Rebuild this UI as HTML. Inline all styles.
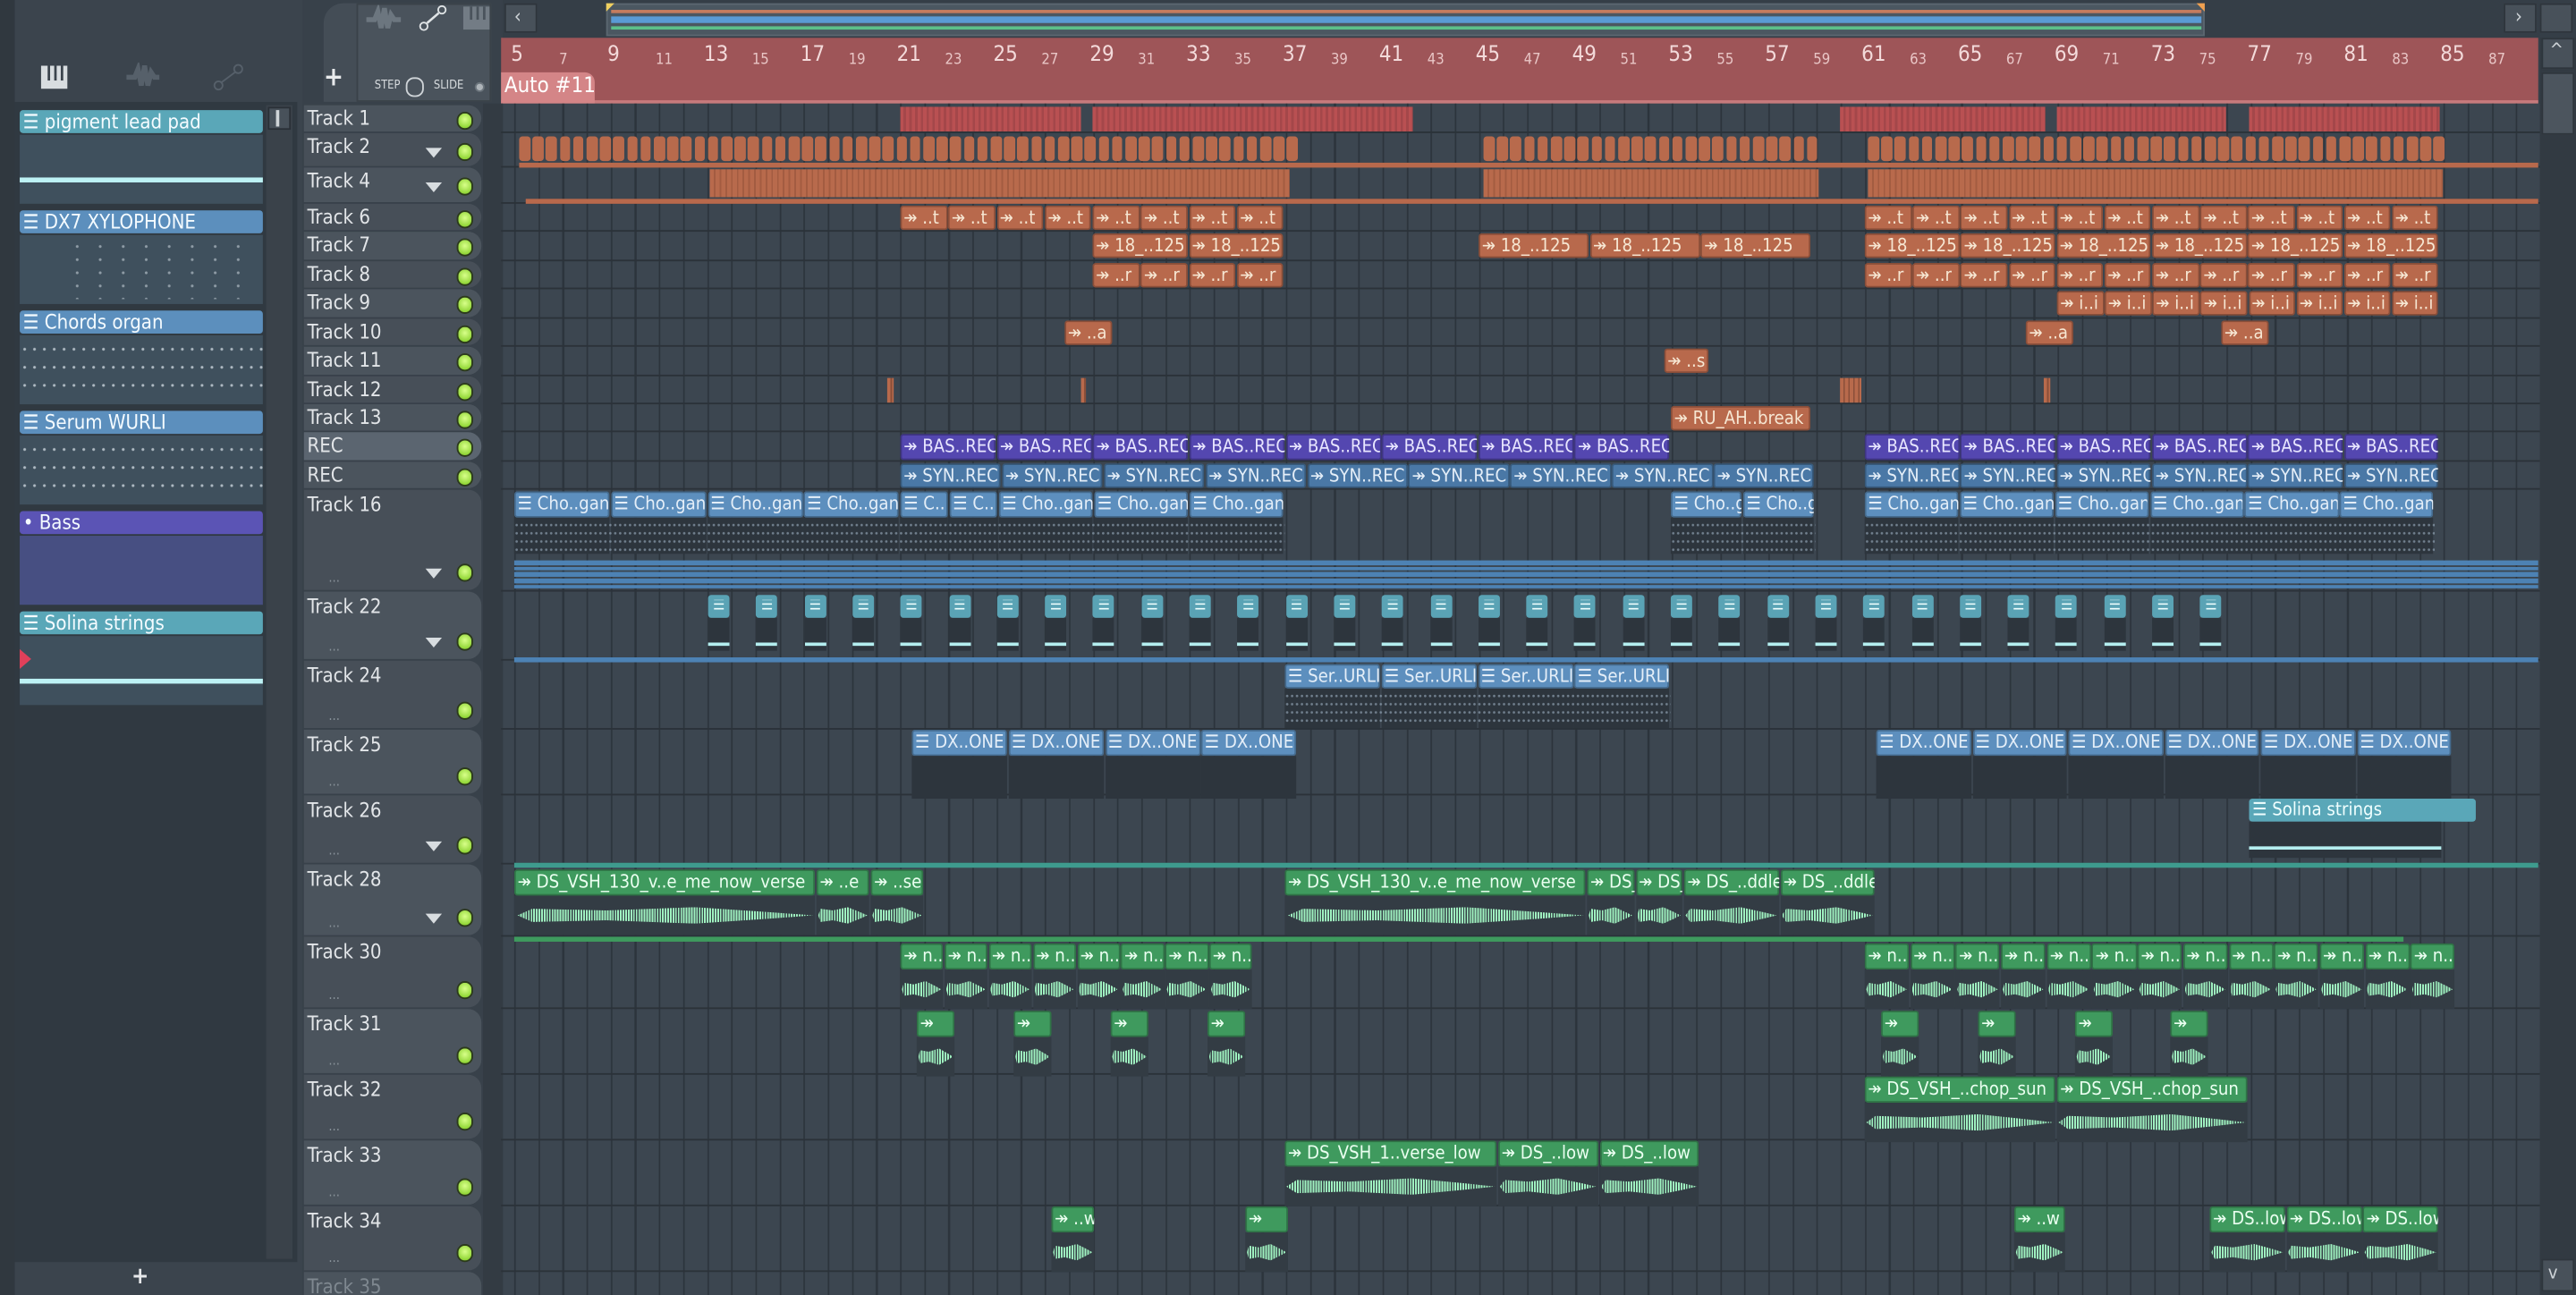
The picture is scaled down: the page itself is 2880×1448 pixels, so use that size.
<!DOCTYPE html>
<html><head><meta charset="utf-8">
<style>
html,body{margin:0;padding:0;background:#363f48;overflow:hidden;width:2880px;height:1448px}
#w{position:absolute;left:0;top:0;width:1568px;height:788px;transform-origin:0 0;transform:scale(1.83673,1.83756);background:#38414a;font-family:"Liberation Sans Narrow","DejaVu Sans Condensed","Liberation Sans",sans-serif;overflow:hidden}
.a{position:absolute;box-sizing:border-box}
.t{position:absolute;white-space:nowrap;overflow:hidden;font-size:11px;line-height:14px}
</style></head><body><div id="w">
<div class="a" style="left:0;top:0;width:184px;height:788px;background:#3b444d"></div>
<div class="a" style="left:0;top:0;width:9px;height:788px;background:#30383f"></div>
<div class="a" style="left:9px;top:62px;width:172px;height:706px;background:#303941"></div>
<div class="a" style="left:162px;top:64px;width:16px;height:702px;background:#3a424a"></div>
<div class="a" style="left:163px;top:65px;width:14px;height:14px;background:#48515a;border:1px solid #2a3037"></div>
<div class="a" style="left:168px;top:67px;width:2px;height:10px;background:#cfd4d8"></div>
<div class="t" style="left:80px;top:770px;color:#e6e8ea;font-size:14px;font-weight:bold">+</div>
<svg class="a" style="left:24px;top:38px" width="20" height="18" viewBox="0 0 20 18"><rect x="1" y="2" width="16" height="14" fill="#d8dde0"/><rect x="5" y="2" width="1.5" height="9" fill="#3b444d"/><rect x="9" y="2" width="1.5" height="9" fill="#3b444d"/><rect x="13" y="2" width="1.5" height="9" fill="#3b444d"/></svg>
<svg class="a" style="left:76px;top:38px" width="22" height="18" viewBox="0 0 22 18"><path d="M1 9h5l2-5 2 10 2-12 2 12 2-8 2 3h3" stroke="#56606a" stroke-width="3" fill="none"/></svg>
<svg class="a" style="left:128px;top:38px" width="22" height="18"><circle cx="5" cy="14" r="2.5" stroke="#56606a" fill="none"/><circle cx="17" cy="4" r="2.5" stroke="#56606a" fill="none"/><path d="M7 12L15 6" stroke="#56606a"/></svg>
<div class="a" style="left:185px;top:0;width:120px;height:62px;background:#38414a"></div>
<div class="a" style="left:197px;top:2px;width:20px;height:60px;background:#444d56;border-top-left-radius:12px"></div>
<div class="a" style="left:217px;top:2px;width:82px;height:60px;background:#4a535c;border:1px solid #3a4249"></div>
<div class="t" style="left:197px;top:40px;color:#e8eaec;font-size:16px;font-weight:bold;width:14px">+</div>
<div class="t" style="left:228px;top:48px;color:#d6dadd;font-size:7px;line-height:9px">STEP</div>
<div class="a" style="left:247px;top:47px;width:11px;height:12px;border:1px solid #cfd4d8;border-radius:5px"></div>
<div class="t" style="left:264px;top:48px;color:#d6dadd;font-size:7px;line-height:9px">SLIDE</div>
<div class="a" style="left:289px;top:50px;width:6px;height:6px;border-radius:3px;background:#aeb4b9;border:1px solid #6b747c"></div>
<svg class="a" style="left:222px;top:3px" width="24" height="18"><path d="M1 9h5l2-5 2 10 2-12 2 12 2-8 2 3h4" stroke="#6c767f" stroke-width="3" fill="none"/></svg>
<svg class="a" style="left:253px;top:2px" width="22" height="18"><circle cx="5" cy="14" r="2.3" stroke="#e0e4e6" fill="none"/><circle cx="16" cy="4" r="2.3" stroke="#e0e4e6" fill="none"/><path d="M7 12L14 6" stroke="#e0e4e6" stroke-width="1.4"/></svg>
<svg class="a" style="left:281px;top:3px" width="18" height="16"><rect x="1" y="1" width="16" height="14" fill="#737c85"/><rect x="5" y="1" width="1.5" height="8" fill="#4a535c"/><rect x="9" y="1" width="1.5" height="8" fill="#4a535c"/><rect x="13" y="1" width="1.5" height="8" fill="#4a535c"/></svg>
<div class="a" style="left:306px;top:0;width:1262px;height:23px;background:#353e47"></div>
<div class="a" style="left:307px;top:2px;width:20px;height:18px;background:#48515a;border:1px solid #2e353c"></div>
<div class="t" style="left:313px;top:3px;color:#cfd4d8;font-size:12px">‹</div>
<div class="a" style="left:1524px;top:2px;width:20px;height:18px;background:#48515a;border:1px solid #2e353c"></div>
<div class="t" style="left:1531px;top:3px;color:#cfd4d8;font-size:12px">›</div>
<div class="a" style="left:1546px;top:2px;width:20px;height:18px;background:#48515a;border:1px solid #2e353c"></div>
<div class="a" style="left:369px;top:2px;width:973px;height:20px;background:#4b5761;border:1px solid #5b6670"></div>
<div class="a" style="left:372px;top:6px;width:968px;height:2px;background:#c57c5e"></div>
<div class="a" style="left:372px;top:10px;width:968px;height:4px;background:#5a9bd5"></div>
<div class="a" style="left:372px;top:16px;width:968px;height:2px;background:#5cc08a"></div>
<div class="a" style="left:369px;top:2px;width:0;height:0;border-left:5px solid #f0d060;border-bottom:5px solid transparent"></div>
<div class="a" style="left:1337px;top:2px;width:0;height:0;border-right:5px solid #f0a050;border-bottom:5px solid transparent"></div>
<div class="a" style="left:305px;top:23px;width:1240px;height:40px;background:#9e5558;border-bottom:2px solid #c77a7c"></div>
<div class="a" style="left:305px;top:44px;width:57px;height:19px;background:#d48587;border-top-right-radius:6px"></div>
<div class="t" style="left:307px;top:44px;color:#fff;font-size:13px;line-height:17px">Auto #11</div>
<div class="a" style="left:1546px;top:23px;width:22px;height:765px;background:#323a42"></div>
<div class="a" style="left:1547px;top:23px;width:20px;height:19px;background:#48515a;border:1px solid #2e353c"></div>
<div class="t" style="left:1552px;top:24px;color:#cfd4d8;font-size:11px">^</div>
<div class="a" style="left:1547px;top:44px;width:20px;height:38px;background:#4c555e;border:1px solid #2e353c"></div>
<div class="a" style="left:1547px;top:766px;width:20px;height:20px;background:#48515a;border:1px solid #2e353c"></div>
<div class="t" style="left:1551px;top:768px;color:#cfd4d8;font-size:11px">v</div>
<div class="a" style="left:305px;top:63px;width:1241px;height:725px;background-color:#3c4650;background-image:repeating-linear-gradient(90deg,#2c343c 0,#2c343c 1px,transparent 1px,transparent 14.68px);background-position:8px 0"></div>
<div class="a" style="left:294px;top:63px;width:12px;height:725px;background:#333b43"></div>
</div>
<script>
var W=document.getElementById('w');
function el(css,txt,cls){var d=document.createElement('div');d.className=cls||'a';d.style.cssText=css;if(txt!=null)d.textContent=txt;W.appendChild(d);return d;}
for(var b=5;b<=87;b+=2){var x=313+(b-5)*14.68;var big=((b-5)%4==0);el('left:'+(x-2)+'px;top:'+(big?27:30)+'px;color:'+(big?'#f3dada':'#e9c6c6')+';font-size:'+(big?13:9)+'px;line-height:14px;',String(b),'t');}
var rows=[["Track 1",64,17,0],["Track 2",81,21,1],["Track 4",102,22,1],["Track 6",124,17,0],["Track 7",141,18,0],["Track 8",159,17,0],["Track 9",176,18,0],["Track 10",194,17,0],["Track 11",211,18,0],["Track 12",229,17,0],["Track 13",246,17,0],["REC",263,18,0],["REC",281,17,0],["Track 16",298,62,1],["Track 22",360,42,1],["Track 24",402,42,0],["Track 25",444,40,0],["Track 26",484,42,1],["Track 28",526,44,1],["Track 30",570,44,0],["Track 31",614,40,0],["Track 32",654,40,0],["Track 33",694,40,0],["Track 34",734,40,0],["Track 35",774,30,0]];
rows.forEach(function(r,i){
 var bg=(r[0]=="REC"&&i==11)?'#5b6570':(i%2?'#474f58':'#4b545d');
 el('left:185px;top:'+r[1]+'px;width:108px;height:'+(r[2]-1)+'px;background:'+bg+';border-radius:0 8px 8px 0;');
 el('left:305px;top:'+(r[1]+r[2]-1)+'px;width:1241px;height:1px;background:#2b3239;');
 var tall=r[2]>25;
 el('left:187px;top:'+(r[1]+(tall?2:1))+'px;color:'+(i==24?'#7f8890':'#e2e5e8')+';font-size:12px;line-height:15px;',r[0],'t');
 if(i==24)return;
 var ly=tall?r[1]+r[2]-17:r[1]+r[2]/2-5;
 el('left:278px;top:'+ly+'px;width:10px;height:11px;border-radius:6px;background:radial-gradient(circle at 50% 40%,#d8ff8a,#79c81a);border:1px solid #2c3a1c;');
 if(r[3])el('left:259px;top:'+(ly+3)+'px;width:0;height:0;border-left:5px solid transparent;border-right:5px solid transparent;border-top:6px solid #d8dde0;');
 if(tall)el('left:200px;top:'+(ly+5)+'px;color:#8a939b;font-size:8px;line-height:8px;','...','t');
});
function clip(x1,x2,n,y,h,hc,tc,label,icon,body,bh){
 var w=(x2-x1)/n;
 for(var k=0;k<n;k++){var x=x1+k*w;
  el('left:'+x+'px;top:'+y+'px;width:'+(w-0.6)+'px;height:'+h+'px;background:'+hc+';border-radius:2px;border:1px solid rgba(0,0,0,.25);overflow:hidden;');
  if(label!=null)el('left:'+(x+2)+'px;top:'+(y+(h-14)/2)+'px;width:'+(w-3)+'px;color:'+tc+';font-size:11px;line-height:14px;',(icon||'')+label,'t');
  if(body){el('left:'+x+'px;top:'+(y+h)+'px;width:'+(w-0.6)+'px;height:'+bh+'px;background:'+body+';');}
 }
}
var AU='\u21a0 ',PT='\u2630 ';
[[548,658],[665,860],[1120,1245],[1252,1355],[1369,1485]].forEach(function(s){el('left:'+s[0]+'px;top:65px;width:'+(s[1]-s[0])+'px;height:15px;background:repeating-linear-gradient(90deg,#b95052 0,#b95052 2px,#a4474a 2px,#a4474a 3.5px);');});
[[316,785],[903,1107],[1137,1487]].forEach(function(s){for(var x=s[0];x<s[1];x+=8.2)el('left:'+x+'px;top:83px;width:6.5px;height:15px;background:#b86a4c;border-radius:2px;');});
el('left:316px;top:99px;width:1229px;height:3px;background:#b8694c;');
[[432,785],[903,1107],[1137,1487]].forEach(function(s){el('left:'+s[0]+'px;top:103px;width:'+(s[1]-s[0])+'px;height:17px;background:repeating-linear-gradient(90deg,#b86a4c 0,#b86a4c 2.5px,#a35c41 2.5px,#a35c41 3.5px);');});
el('left:320px;top:121px;width:1225px;height:3px;background:#b8694c;');
var OR='#b8694c',OT='#f6e6d2';
clip(548,782,8,125,15,OR,OT,'..t',AU);clip(1135,1485,12,125,15,OR,OT,'..t',AU);
clip(665,782,2,142,15,OR,OT,'18_..125',AU);clip(900,1103,3,142,15,OR,OT,'18_..125',AU);clip(1135,1485,6,142,15,OR,OT,'18_..125',AU);
clip(665,782,4,160,15,OR,OT,'..r',AU);clip(1135,1485,12,160,15,OR,OT,'..r',AU);
clip(1252,1485,8,177,15,OR,OT,'i..i',AU);
clip(648,678,1,195,15,OR,OT,'..a',AU);clip(1233,1263,1,195,15,OR,OT,'..a',AU);clip(1352,1382,1,195,15,OR,OT,'..a',AU);
clip(1013,1041,1,212,15,OR,OT,'..s',AU);
[[540,544],[658,661],[1120,1133],[1244,1248]].forEach(function(s){el('left:'+s[0]+'px;top:230px;width:'+(s[1]-s[0])+'px;height:15px;background:repeating-linear-gradient(90deg,#b86a4c 0,#b86a4c 2px,#8a4f39 2px,#8a4f39 3px);');});
clip(1017,1103,1,247,15,OR,OT,'RU_AH..break',AU);
var PU='#5447b0',PUT='#e8e6ff';
clip(548,1017,8,264,16,PU,PUT,'BAS..REC',AU);clip(1135,1485,6,264,16,PU,PUT,'BAS..REC',AU);
var BL='#4a78a6',BLT='#e4eef8';
clip(548,1105,9,282,15,BL,BLT,'SYN..REC',AU);clip(1135,1485,6,282,15,BL,BLT,'SYN..REC',AU);
var PB='#5d8fbe';
clip(313,548,4,299,16,PB,BLT,'Cho..gan',PT,'#2d353d',22);clip(548,608,2,299,16,PB,BLT,'C..',PT,'#2d353d',22);clip(608,782,3,299,16,PB,BLT,'Cho..gan',PT,'#2d353d',22);
clip(1017,1105,2,299,16,PB,BLT,'Cho..gan',PT,'#2d353d',22);clip(1135,1482,6,299,16,PB,BLT,'Cho..gan',PT,'#2d353d',22);
function dots(x1,x2,y,h){el('left:'+x1+'px;top:'+y+'px;width:'+(x2-x1)+'px;height:'+h+'px;background-image:radial-gradient(circle,#9fb2c4 0.6px,transparent 0.9px);background-size:3px 5px;opacity:.6;');}
[[313,782],[1017,1105],[1135,1482]].forEach(function(s){dots(s[0],s[1],317,19);});
for(var j=0;j<5;j++)el('left:313px;top:'+(341+j*3.7)+'px;width:1232px;height:2.6px;background:#4d82b4;');
for(var x=431;x<1360;x+=29.3){el('left:'+x+'px;top:362px;width:13px;height:14px;background:#5aa3b5;border-radius:2px;');el('left:'+(x+3)+'px;top:365px;color:#f0ffff;font-size:9px;line-height:9px;','\u2630','t');el('left:'+x+'px;top:376px;width:13px;height:20px;background:#2d353d;');el('left:'+x+'px;top:391px;width:13px;height:2px;background:#b4eef0;');}
el('left:313px;top:400px;width:1232px;height:3px;background:#4d82b4;');
clip(782,1017,4,404,15,PB,BLT,'Ser..URLI',PT,'#2d353d',24);dots(782,1017,421,20);
clip(555,790,4,444,16,PB,BLT,'DX..ONE',PT,'#2d353d',26);clip(1142,1493,6,444,16,PB,BLT,'DX..ONE',PT,'#2d353d',26);
el('left:1369px;top:486px;width:138px;height:14px;background:#5aa7b8;border-radius:2px;');el('left:1371px;top:486px;color:#f0ffff;font-size:11px;line-height:14px;',PT+'Solina strings','t');el('left:1369px;top:500px;width:117px;height:22px;background:#2d353d;');el('left:1369px;top:515px;width:117px;height:2px;background:#b4eef0;');
el('left:313px;top:525px;width:1232px;height:3px;background:#3e9b8e;');
var GR='#3f9a5e',GT='#eafff0';
function wave(x1,x2,y){el('left:'+x1+'px;top:'+(y-5)+'px;width:'+(x2-x1)+'px;height:10px;background:repeating-linear-gradient(90deg,#9ff2c0 0,#9ff2c0 1px,transparent 1px,transparent 1.6px);clip-path:polygon(0 50%,5% 10%,30% 20%,60% 0,85% 30%,100% 50%,85% 70%,60% 100%,30% 80%,5% 90%);');}
function gclip(x1,x2,n,y,lab){clip(x1,x2,n,y,16,GR,GT,lab,AU,'#333c44',24);var w=(x2-x1)/n;for(var k=0;k<n;k++)wave(x1+k*w+1,x1+(k+1)*w-2,y+28);}
clip(313,497,1,529,16,GR,GT,'DS_VSH_130_v..e_me_now_verse',AU,'#333c44',24);wave(315,495,557);
gclip(497,530,1,529,'..e');gclip(530,563,1,529,'..se');
clip(782,966,1,529,16,GR,GT,'DS_VSH_130_v..e_me_now_verse',AU,'#333c44',24);wave(784,964,557);
gclip(966,1025,2,529,'DS_..ddl');gclip(1025,1142,2,529,'DS_..ddle');
el('left:313px;top:570px;width:1150px;height:3px;background:#3e9b5e;');
gclip(548,763,8,574,'n..');gclip(1135,1495,13,574,'n..');
[558,617,676,735,1145,1204,1263,1321].forEach(function(x){gclip(x,x+24,1,615,'');});
gclip(1135,1369,2,655,'DS_VSH_..chop_sun');
gclip(782,912,1,694,'DS_VSH_1..verse_low');gclip(912,1035,2,694,'DS_..low');
gclip(640,667,1,734,'..w');gclip(758,785,1,734,'');gclip(1226,1258,1,734,'..w');gclip(1345,1485,3,734,'DS..low');
var ch=[["pigment lead pad",67,'#5aa7b8',58,'lead'],["DX7 XYLOPHONE",128,'#5c8fbd',58,'xy'],["Chords organ",189,'#5c8fbd',58,'ch'],["Serum WURLI",250,'#5c8fbd',58,'ch'],["Bass",311,'#5b54b5',58,'bass'],["Solina strings",372,'#5aa7b8',58,'lead']];
ch.forEach(function(c){
 el('left:12px;top:'+c[1]+'px;width:148px;height:14px;background:'+c[2]+';border-radius:2px;');
 el('left:14px;top:'+c[1]+'px;color:#f4fbff;font-size:12px;line-height:14px;',(c[4]=='bass'?'\u2022 ':PT)+c[0],'t');
 el('left:12px;top:'+(c[1]+15)+'px;width:148px;height:'+(c[3]-16)+'px;background:'+(c[4]=='bass'?'#474f82':'#3f505d')+';');
 if(c[4]=='lead')el('left:12px;top:'+(c[1]+41)+'px;width:148px;height:3px;background:#bdf2f5;');
 if(c[4]=='ch')el('left:12px;top:'+(c[1]+18)+'px;width:148px;height:36px;background-image:radial-gradient(circle,#dfe8ef 0.7px,transparent 1px);background-size:6px 11px;opacity:.7;');
 if(c[4]=='xy')el('left:40px;top:'+(c[1]+18)+'px;width:110px;height:36px;background-image:radial-gradient(circle,#dfe8ef 0.7px,transparent 1px);background-size:14px 8px;opacity:.5;');
});
el('left:12px;top:395px;width:0;height:0;border-top:6px solid transparent;border-bottom:6px solid transparent;border-left:7px solid #e0405a;');
</script>
</body></html>
